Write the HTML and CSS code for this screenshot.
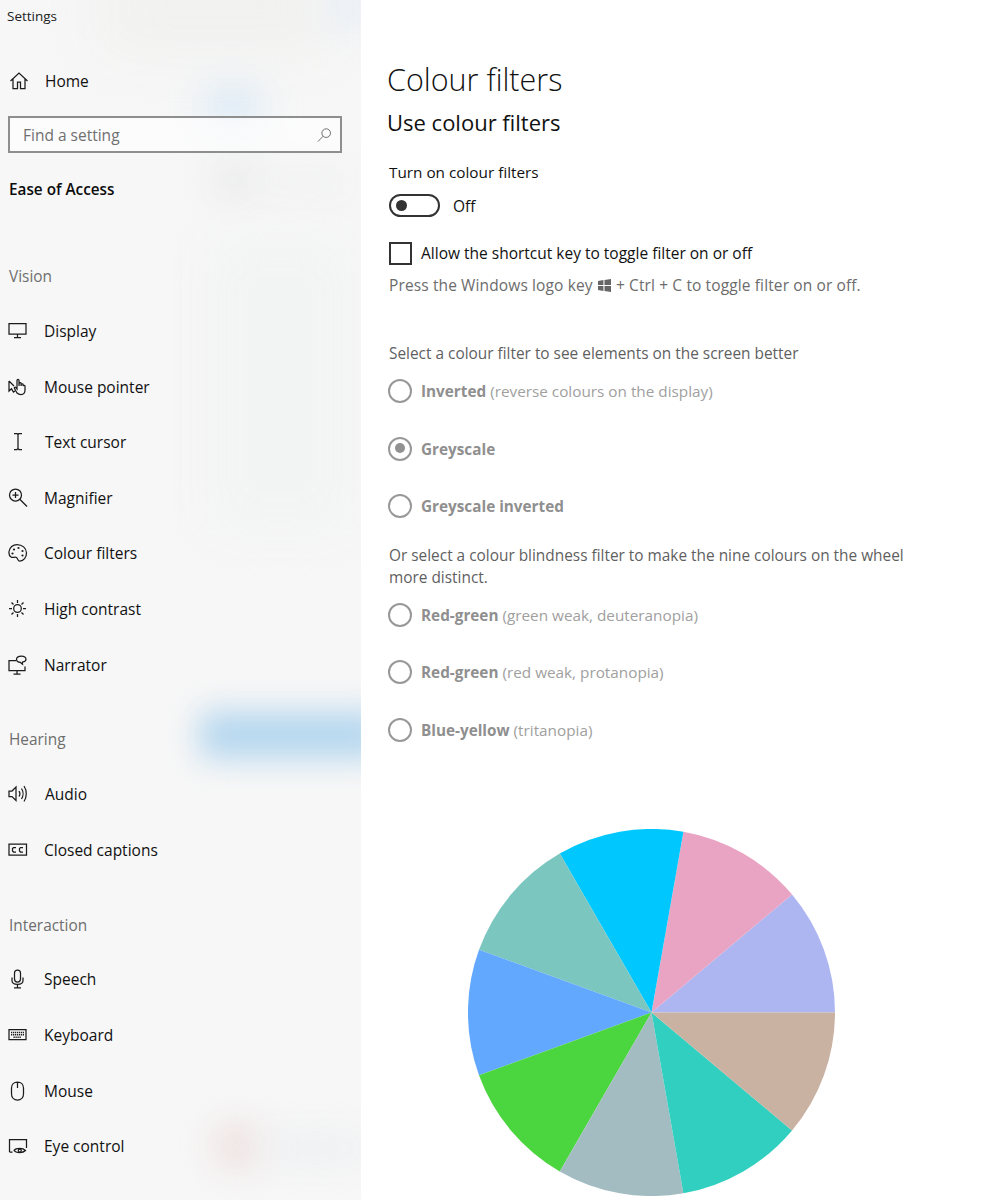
FILE: index.html
```html
<!DOCTYPE html>
<html lang="en">
<head>
<meta charset="utf-8">
<title>Settings</title>
<link rel="stylesheet" href="styles.css">
</head>
<body>
<div class="app">
  <aside class="sidebar">
    <div class="blur blur-a"></div>
    <div class="blur blur-b"></div>
    <div class="blur blur-c"></div>
    <div class="blur blur-d"></div>
    <div class="blur blur-e"></div>
    <div class="blur blur-f"></div>
    <div class="blur blur-g"></div>
    <div class="blur blur-h"></div>
    <div class="blur blur-i"></div>
    <div class="side-content">
      <div class="app-title">Settings</div>
      <div class="home">
        <svg class="icon" viewBox="0 0 20 20"><path d="M1.500 10 10 2l8.500 8M4 8v9.500h4.500V11h3v6.500H16V8"/></svg>
        <span>Home</span>
      </div>
      <div class="search">
        <span>Find a setting</span>
        <svg class="search-icon" viewBox="0 0 16 16"><circle cx="9.800" cy="6" r="4.600"/><path d="M6.500 9.300 1 15"/></svg>
      </div>
      <div class="category">Ease of Access</div>

      <div class="group-label first">Vision</div>
      <div class="nav-item"><svg class="icon" viewBox="0 0 20 20"><path d="M1 2.500h17v10.500H1zM9.500 13v3.500M6 16.500h7"/></svg><span>Display</span></div>
      <div class="nav-item"><svg class="icon" viewBox="0 0 20 20"><path d="M1 4v10l2.500-2.200L5.500 15l1.500-1M1 4l5 5M9 16l-2.500-4.500c-.6-1 .7-1.800 1.400-.9L9 12V3.500c0-1.500 2-1.500 2 0V9l.2-2.500c.2-1.200 1.800-1.200 1.900 0V9l.2-1.500c.2-1 1.700-1 1.800 0V9c.2-.9 1.800-.9 1.900 0v4c0 2.800-1.700 4.500-4 4.500-1.700 0-2.800-.4-4-1.500z"/></svg><span>Mouse pointer</span></div>
      <div class="nav-item"><svg class="icon" viewBox="0 0 20 20"><path d="M6 1.500h3l1 1 1-1h3M6 17.500h3l1-1 1 1h3M10 2.500v14"/></svg><span class="nudge">Text cursor</span></div>
      <div class="nav-item"><svg class="icon" viewBox="0 0 20 20"><circle cx="7.500" cy="7" r="6"/><path d="M11.800 11.200 19 18.500M7.500 4v6M4.500 7h6"/></svg><span>Magnifier</span></div>
      <div class="nav-item"><svg class="icon" viewBox="0 0 20 20"><path d="M9 1.500c5 0 9.500 3.500 9.500 8.500 0 4.500-3 8-6.500 8-2.500 0-2-2.500-3.500-3.500-1.800-1.200-3.500 1-5.500-.5C1 12.800.8 10.500 1 8.500 1.500 4.500 5 1.500 9 1.500z"/><circle class="dot" cx="6" cy="6.500" r="1.100"/><circle class="dot" cx="10.500" cy="5" r="1.100"/><circle class="dot" cx="14.500" cy="8" r="1.100"/><circle class="dot" cx="14.500" cy="12.500" r="1.100"/><circle class="dot" cx="4.500" cy="10.500" r="1.100"/></svg><span>Colour filters</span></div>
      <div class="nav-item"><svg class="icon" viewBox="0 0 20 20"><circle cx="9.500" cy="9.500" r="3.800"/><path d="M9.500 1v3M9.500 15v3M1 9.500h3M15 9.500h3M3.500 3.500l2 2M13.500 13.500l2 2M15.500 3.500l-2 2M5.500 13.500l-2 2"/></svg><span>High contrast</span></div>
      <div class="nav-item"><svg class="icon" viewBox="0 0 20 20"><path d="M8 5.500H1v10h16v-4M9 15.500v3.500M5.500 19h7"/><path d="M13.500 1c-3 0-5 1.500-5 3.300 0 1.800 1.800 3 4 3 .4 1 1 1.500 2 2-.2-.8-.2-1.500 0-2.200 2-.4 3.500-1.400 3.500-2.900C18 2.500 16.200 1 13.500 1z"/></svg><span>Narrator</span></div>

      <div class="group-label">Hearing</div>
      <div class="nav-item"><svg class="icon" viewBox="0 0 20 20"><path d="M1 7v5.500h3l4 4V3L4 7zM11 7c1 1.500 1 4 0 5.500M13.500 4.500c2 3 2 7.500 0 10.500M16 2c3 4.500 3 11 0 15.500"/></svg><span class="nudge">Audio</span></div>
      <div class="nav-item"><svg class="icon" viewBox="0 0 20 20"><path d="M1 4h17.500v11H1zM8 7.500H5.500L4.500 8.500v2.500l1 1H8M15 7.500h-2.500l-1 1v2.500l1 1H15"/></svg><span>Closed captions</span></div>

      <div class="group-label">Interaction</div>
      <div class="nav-item"><svg class="icon" viewBox="0 0 20 20"><rect x="6.500" y="1" width="6" height="12" rx="3"/><path d="M4 8.500v3c0 2.500 2.500 3.800 5.500 3.800S15 14 15 11.500v-3M9.500 15.300v3.500M6 18.800h7"/></svg><span>Speech</span></div>
      <div class="nav-item"><svg class="icon" viewBox="0 0 20 20"><path d="M1 4.500h17v10H1z"/><path class="keys" d="M3 7.500h13M3 9.800h13M5.500 12.200h8"/></svg><span>Keyboard</span></div>
      <div class="nav-item"><svg class="icon" viewBox="0 0 20 20"><path d="M3.500 7c0-3.500 2.500-6 6-6s6 2.500 6 6v6c0 3.500-2.500 6-6 6s-6-2.500-6-6zM9.500 1v6"/></svg><span>Mouse</span></div>
      <div class="nav-item"><svg class="icon" viewBox="0 0 20 20"><path d="M1.500 16V3.500h17V12M1.500 16h3"/><path d="M6 14.500c2-2.700 9-2.700 11.500 0-2.500 2.700-9.500 2.700-11.500 0z"/><circle cx="11.800" cy="14.500" r="1.500"/></svg><span>Eye control</span></div>
    </div>
  </aside>

  <main class="main">
    <h1>Colour filters</h1>
    <h2>Use colour filters</h2>
    <div class="label">Turn on colour filters</div>
    <div class="toggle-row">
      <span class="toggle"><span class="knob"></span></span>
      <span class="toggle-state">Off</span>
    </div>
    <div class="check-row">
      <span class="checkbox"></span>
      <span>Allow the shortcut key to toggle filter on or off</span>
    </div>
    <p class="hint">Press the Windows logo key
      <svg class="win" viewBox="0 0 12 12"><path d="M0 1.800 5 1v4.500H0zM6 .9 12 0v5.500H6zM0 6.500h5V11l-5-.8zM6 6.500h6V12l-6-.9z"/></svg>
      + Ctrl + C to toggle filter on or off.</p>

    <p class="prompt">Select a colour filter to see elements on the screen better</p>
    <div class="radio"><span class="ring"></span><span><b>Inverted</b> (reverse colours on the display)</span></div>
    <div class="radio"><span class="ring selected"></span><span><b>Greyscale</b></span></div>
    <div class="radio"><span class="ring"></span><span><b>Greyscale inverted</b></span></div>

    <p class="prompt second">Or select a colour blindness filter to make the nine colours on the wheel more distinct.</p>
    <div class="radio"><span class="ring"></span><span><b>Red-green</b> (green weak, deuteranopia)</span></div>
    <div class="radio"><span class="ring"></span><span><b>Red-green</b> (red weak, protanopia)</span></div>
    <div class="radio"><span class="ring"></span><span><b>Blue-yellow</b> (tritanopia)</span></div>

    <svg class="wheel" viewBox="-100 -100 200 200">
      <path fill="#aeb6f2" d="M0 0 100 0A100 100 0 0 0 76.600-64.300Z"/>
      <path fill="#e9a4c4" d="M0 0 76.600-64.300A100 100 0 0 0 17.400-98.500Z"/>
      <path fill="#00c8ff" d="M0 0 17.400-98.500A100 100 0 0 0-50-86.600Z"/>
      <path fill="#7cc6c0" d="M0 0-50-86.600A100 100 0 0 0-94-34.200Z"/>
      <path fill="#62a8ff" d="M0 0-94-34.200A100 100 0 0 0-94 34.200Z"/>
      <path fill="#4bd53f" d="M0 0-94 34.200A100 100 0 0 0-50 86.600Z"/>
      <path fill="#a3bcc2" d="M0 0-50 86.600A100 100 0 0 0 17.400 98.500Z"/>
      <path fill="#30cfc0" d="M0 0 17.400 98.500A100 100 0 0 0 76.600 64.300Z"/>
      <path fill="#c9b2a2" d="M0 0 76.600 64.300A100 100 0 0 0 100 0Z"/>
    </svg>
  </main>
</div>
</body>
</html>
```
FILE: styles.css
```css
* { box-sizing: border-box; }
html, body { margin: 0; height: 1200px; overflow: hidden; background: #fff; }
body { font-family: "Open Sans", "Noto Sans", "Liberation Sans", sans-serif; font-size: 15.500px; color: #111; }

.app { display: grid; grid-template-columns: 361px 1fr; height: 1200px; }

/* Sidebar */
.sidebar { position: relative; overflow: hidden; background: #f7f7f7; }
.side-content { position: relative; padding: 0 0 0 8px; }

.blur { position: absolute; filter: blur(18px); }
.blur-a { left: 205px; top: 85px; width: 55px; height: 40px; background: #dcebf7; }
.blur-b { left: 215px; top: 168px; width: 36px; height: 24px; background: #e2e3e5; }
.blur-c { left: 260px; top: 175px; width: 90px; height: 14px; background: #ecedee; }
.blur-d { left: 325px; top: -10px; width: 40px; height: 32px; background: #dfecf8; }
.blur-e { left: 100px; top: -30px; width: 230px; height: 80px; background: #f0f0ef; filter: blur(30px); }
.blur-f { left: 210px; top: 240px; width: 140px; height: 290px; background: #f2f3f3; filter: blur(24px); }
.blur-g { left: 200px; top: 712px; width: 185px; height: 46px; background: #b2d5ee; filter: blur(16px); }
.blur-h { left: 218px; top: 1128px; width: 36px; height: 36px; background: #ebd8d6; }
.blur-i { left: 265px; top: 1135px; width: 100px; height: 26px; background: #eceef1; }

.app-title { height: 58px; padding: 7px 0 0; margin-left: -1px; font-size: 13.500px; line-height: 18px; color: #222; }

.icon { width: 20px; height: 20px; flex: none; fill: none; stroke: #1c1c1c; stroke-width: 1.250; }
.icon .dot { fill: #1c1c1c; stroke: none; }
.icon .keys { stroke-dasharray: 1.300 .700; stroke-width: 1.500; }

.home { display: flex; align-items: center; gap: 16px; height: 48px; padding-left: 1px; font-size: 15.500px; margin-top: -1px; }

.search { display: flex; align-items: center; justify-content: space-between; width: 334px; height: 37px; margin-top: 11px; padding: 0 8px 0 13px; border: 2px solid #8e8e8e; background: rgba(255,255,255,.6); color: #6f6f6f; font-size: 15.500px; }
.search-icon { width: 15px; height: 16px; fill: none; stroke: #666; stroke-width: 1; }

.category { margin-top: 24px; margin-left: 1px; height: 24px; line-height: 24px; font-weight: 600; font-size: 15.300px; color: #0c0c0c; }

.group-label { height: 36px; margin-top: 30px; margin-left: 1px; line-height: 36px; font-size: 15.400px; color: #6e6e6e; }
.group-label.first { margin-top: 58.300px; }

.nav-item { display: flex; align-items: center; gap: 16px; height: 55.600px; }
.group-label + .nav-item { margin-top: 8px; }
.nav-item .nudge { margin-left: 1px; }

/* Main */
.main { padding-left: 26px; min-width: 0; }
h1 { margin: 59px 0 0 0; font-size: 30.500px; line-height: 40px; font-weight: 300; color: #111; }
h2 { margin: 3px 0 0 0; font-size: 22px; line-height: 40px; font-weight: 400; color: #111; }

.label { margin: 18px 0 0 2px; height: 24px; line-height: 24px; font-size: 15.300px; }
.toggle-row { display: flex; align-items: center; gap: 13px; margin: 9px 0 0 2px; height: 24px; }
.toggle { display: flex; align-items: center; width: 51px; height: 23px; padding-left: 5px; border: 2px solid #333; border-radius: 12px; }
.knob { width: 11px; height: 11px; border-radius: 50%; background: #333; }
.toggle-state { padding-top: 2px; }

.check-row { display: flex; align-items: center; gap: 9px; margin: 24px 0 0 2px; height: 24px; }
.checkbox { width: 23px; height: 23px; border: 2px solid #333; flex: none; }

.hint { margin: 8px 0 0 2px; line-height: 24px; color: #6c6c6c; letter-spacing: .12px; }
.win { width: 13px; height: 13px; fill: #666; vertical-align: -1px; margin: 0 1px; }

.prompt { margin: 46px 0 0 2px; line-height: 22px; color: #5f5f5f; width: 540px; font-size: 15.400px; }
.prompt.second { margin-top: 9.400px; }

.radio { display: flex; align-items: center; gap: 9px; margin: 0 0 0 1px; height: 57.800px; color: #a0a0a0; font-size: 15.300px; }
.radio b { font-weight: 700; color: #8f8f8f; }
.prompt + .radio { margin-top: -3px; }
.ring { position: relative; width: 24px; height: 24px; flex: none; border: 2.500px solid #989898; border-radius: 50%; }
.ring.selected::after { content: ""; position: absolute; left: 4.500px; top: 4.500px; width: 10px; height: 10px; border-radius: 50%; background: #919191; }

.wheel { display: block; width: 367px; height: 367px; margin: 70px 0 0 81px; }
```
